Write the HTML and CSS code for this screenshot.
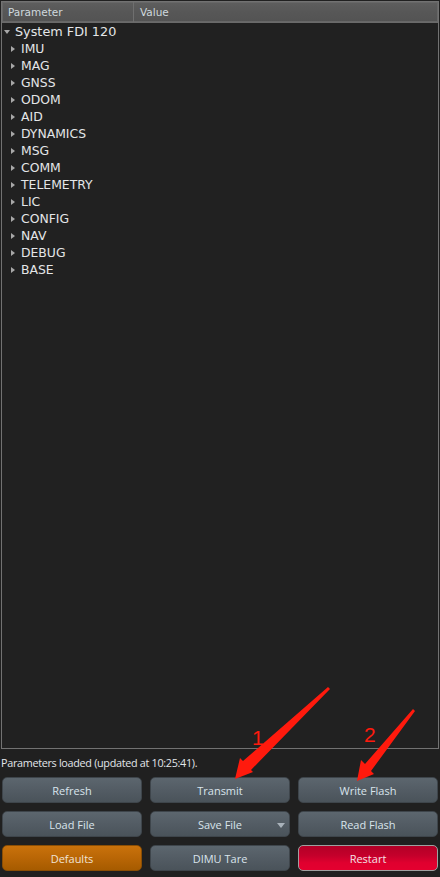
FILE: index.html
```html
<!DOCTYPE html>
<html>
<head>
<meta charset="utf-8">
<link rel="stylesheet" href="styles.css">
</head>
<body>
<div class="app">
  <div class="panel">
    <div class="header">
      <div class="hcell hparam">Parameter</div>
      <div class="hcell hvalue">Value</div>
    </div>
    <div class="tree">
      <div class="row root"><span class="tri down"></span>System FDI 120</div>
      <div class="row child"><span class="tri right"></span>IMU</div>
      <div class="row child"><span class="tri right"></span>MAG</div>
      <div class="row child"><span class="tri right"></span>GNSS</div>
      <div class="row child"><span class="tri right"></span>ODOM</div>
      <div class="row child"><span class="tri right"></span>AID</div>
      <div class="row child"><span class="tri right"></span>DYNAMICS</div>
      <div class="row child"><span class="tri right"></span>MSG</div>
      <div class="row child"><span class="tri right"></span>COMM</div>
      <div class="row child"><span class="tri right"></span>TELEMETRY</div>
      <div class="row child"><span class="tri right"></span>LIC</div>
      <div class="row child"><span class="tri right"></span>CONFIG</div>
      <div class="row child"><span class="tri right"></span>NAV</div>
      <div class="row child"><span class="tri right"></span>DEBUG</div>
      <div class="row child"><span class="tri right"></span>BASE</div>
    </div>
  </div>
  <div class="status">Parameters loaded (updated at 10:25:41).</div>
  <div class="buttons">
    <div class="btn">Refresh</div>
    <div class="btn">Transmit</div>
    <div class="btn">Write Flash</div>
    <div class="btn">Load File</div>
    <div class="btn drop">Save File<span class="caret"></span></div>
    <div class="btn">Read Flash</div>
    <div class="btn orange">Defaults</div>
    <div class="btn">DIMU Tare</div>
    <div class="btn red">Restart</div>
  </div>
  <svg class="annot" width="440" height="877" viewBox="0 0 440 877">
    <polygon points="328,686 330,688 251,769 253,771 235,778 240,757 243,760" fill="#ff1a0d"/>
    <polygon points="413,708 415,710 371,770 374,773 357,780 361,759 365,763" fill="#ff1a0d"/>
    <text x="252" y="744" class="num">1</text>
    <text x="364" y="741" class="num">2</text>
  </svg>
</div>
</body>
</html>
```
FILE: styles.css
```css
html, body {
  margin: 0;
  padding: 0;
  background: #202020;
}
.app {
  position: relative;
  width: 440px;
  height: 877px;
  font-family: "Open Sans", "DejaVu Sans", sans-serif;
  color: #dde3e8;
}
.panel {
  margin: 1px 1px 0 1px;
  height: 746px;
  border: 1px solid #727272;
  background: #212121;
  display: flex;
  flex-direction: column;
}
.header {
  display: flex;
  height: 20px;
  border-bottom: 1px solid #6a6a6a;
  background: linear-gradient(#5e5e5e, #575757 50%, #535353);
  box-shadow: inset 0 0 0 1px #676767;
}
.hcell {
  line-height: 21px;
  color: #cfd9de;
  padding-left: 6px;
  font-family: "DejaVu Sans", sans-serif;
  font-size: 10.5px;
}
.hparam {
  width: 125px;
  border-right: 1px solid #6f6f6f;
}
.tree {
  display: flex;
  flex-direction: column;
  padding-top: 0;
}
.row {
  height: 17px;
  line-height: 17px;
  font-family: "DejaVu Sans", sans-serif;
  font-size: 12.4px;
  color: #e4e6e8;
  display: flex;
  align-items: center;
  white-space: nowrap;
}
.root {
  padding-left: 2px;
  font-size: 12.8px;
}
.child {
  padding-left: 9px;
}
.tri {
  display: inline-block;
  width: 0;
  height: 0;
}
.tri.down {
  border-left: 3px solid transparent;
  border-right: 3px solid transparent;
  border-top: 4px solid #a8a8a8;
  margin-right: 5px;
}
.tri.right {
  border-top: 3.5px solid transparent;
  border-bottom: 3.5px solid transparent;
  border-left: 4px solid #a8a8a8;
  margin-right: 6px;
}
.status {
  font-size: 10.8px;
  line-height: 13px;
  padding: 7px 0 0 1px;
  height: 14px;
  color: #e2e6ea;
  letter-spacing: -0.3px;
}
.buttons {
  display: grid;
  grid-template-columns: repeat(3, 140px);
  grid-auto-rows: 26px;
  column-gap: 8px;
  row-gap: 8px;
  padding: 7px 2px 0 2px;
}
.btn {
  position: relative;
  box-sizing: border-box;
  border-radius: 5px;
  border: 1px solid #3e454b;
  background: linear-gradient(#5c666e, #535c64 50%, #4a535a);
  color: #d9e4ec;
  font-size: 11px;
  display: flex;
  align-items: center;
  justify-content: center;
}
.btn.orange {
  border-color: #8a4e05;
  background: linear-gradient(#c9720c, #b96606 50%, #a65b00);
  color: #f0e4d6;
}
.btn.red {
  border-color: #a0a0a0;
  background: linear-gradient(#b30027, #c4002b 40%, #e0002f 70%, #e4002f);
  color: #f4e2e6;
}
.caret {
  position: absolute;
  right: 4px;
  top: 11px;
  width: 0;
  height: 0;
  border-left: 4.5px solid transparent;
  border-right: 4.5px solid transparent;
  border-top: 5px solid #a9b2ba;
}
.annot {
  position: absolute;
  left: 0;
  top: 0;
  pointer-events: none;
}
.num {
  font-family: "Liberation Sans", sans-serif;
  font-size: 21px;
  fill: #ff1a0d;
}
```
